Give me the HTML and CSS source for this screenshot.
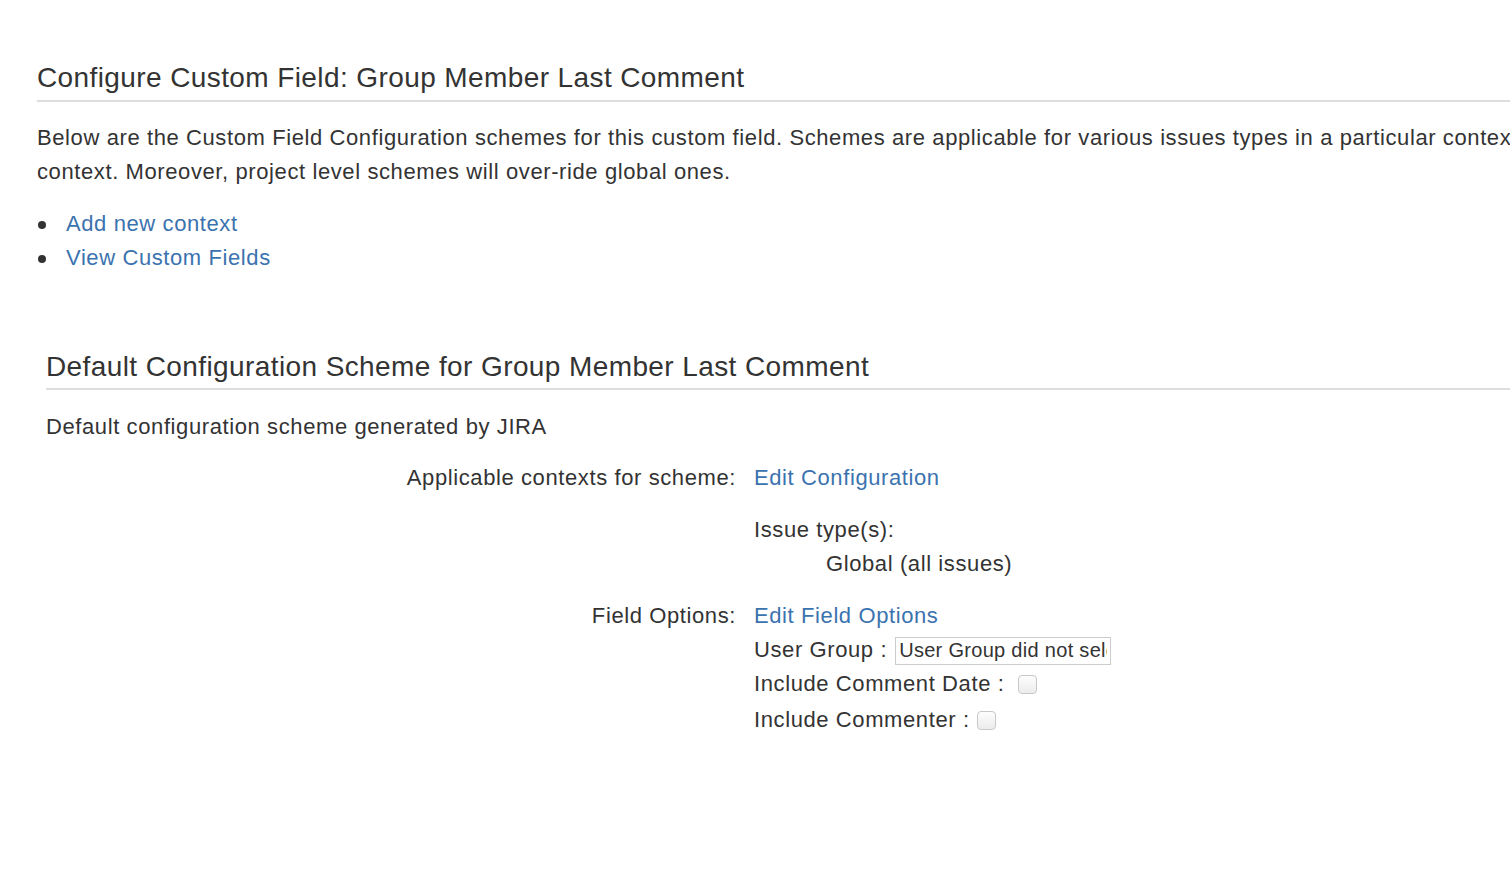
FILE: index.html
```html
<!DOCTYPE html>
<html lang="en">
<head>
  <meta charset="UTF-8">
  <title>Configure Custom Field</title>
<link rel="stylesheet" href="styles.css">
</head>
<body>

  <!-- Page content -->
  <div class="page">
    <h1 class="page-title">Configure Custom Field: Group Member Last Comment</h1>

    <p class="intro">Below are the Custom Field Configuration schemes for this custom field. Schemes are applicable for various issues types in a particular context or project context. Moreover, project level schemes will over-ride global ones.</p>

    <ul class="links">
      <li><a href="#">Add new context</a></li>
      <li><a href="#">View Custom Fields</a></li>
    </ul>

    <!-- Scheme panel -->
    <div class="scheme">
      <h2 class="scheme-title">Default Configuration Scheme for Group Member Last Comment</h2>
      <p class="scheme-desc">Default configuration scheme generated by JIRA</p>

      <div class="scheme-table">
        <div class="label">Applicable contexts for scheme:</div>
        <div class="value">
          <a href="#">Edit Configuration</a>
          <div class="issue-types">
            <div>Issue type(s):</div>
            <div class="indent">Global (all issues)</div>
          </div>
        </div>

        <div class="label">Field Options:</div>
        <div class="value">
          <a href="#">Edit Field Options</a>
          <div class="opt">User Group : <input class="text-field" type="text" value="User Group did not select" readonly></div>
          <div class="opt opt-date">Include Comment Date : <input class="check" type="checkbox"></div>
          <div class="opt opt-last">Include Commenter :<input class="check" type="checkbox"></div>
        </div>
      </div>
    </div>
  </div>

</body>
</html>
```

FILE: styles.css
```css
body {
  margin: 0;
  font-family: 'Liberation Sans', Arial, sans-serif;
  color: #333;
  background: #fff;
  overflow: hidden;
  font-size: 22px;
  letter-spacing: 0.6px;
  line-height: 34px;
}

a {
  color: #3b73af;
  text-decoration: none;
}

.page {
  width: 1700px;
  padding: 58px 0 0 37px;
}

/* Headings */
.page-title {
  font-size: 28px;
  font-weight: normal;
  letter-spacing: 0.4px;
  line-height: 40px;
  margin: 0;
  padding-bottom: 2px;
  border-bottom: 2px solid #ddd;
}

.intro {
  width: 1650px;
  margin: 19px 0 0;
}

.links {
  list-style: none;
  margin: 18px 0 0;
  padding-left: 1px;
}

.links li {
  display: flex;
  align-items: center;
}

.links li::before {
  content: "";
  width: 8px;
  height: 8px;
  border-radius: 50%;
  background: #333;
  margin-right: 20px;
  margin-top: 1px;
}

/* Scheme panel */
.scheme {
  margin-top: 72px;
  padding-left: 9px;
}

.scheme-title {
  font-size: 28px;
  font-weight: normal;
  letter-spacing: 0.4px;
  line-height: 40px;
  margin: 0;
  padding-bottom: 1px;
  border-bottom: 2px solid #ddd;
}

.scheme-desc {
  margin: 20px 0 0;
}

.scheme-table {
  display: grid;
  grid-template-columns: 690px auto;
  column-gap: 18px;
  row-gap: 18px;
  margin-top: 17px;
}

.label {
  text-align: right;
}

.issue-types {
  margin-top: 18px;
}

.indent {
  padding-left: 72px;
}

.opt {
  display: flex;
  align-items: center;
  height: 34px;
}

.opt-last {
  margin-top: 2px;
}

.text-field {
  width: 216px;
  height: 28px;
  box-sizing: border-box;
  margin: 1px 0 0 8px;
  padding: 0 3px;
  border: 1px solid #ccc;
  font-family: 'Liberation Sans', Arial, sans-serif;
  font-size: 20px;
  letter-spacing: 0.3px;
  color: #333;
  background: #fff;
  outline: none;
}

.check {
  appearance: none;
  width: 19px;
  height: 19px;
  margin: 0 0 0 6px;
  border: 1px solid #c8c8c8;
  border-radius: 4px;
  background: linear-gradient(#fdfdfd, #ececec);
}

.opt-date .check {
  margin-left: 14px;
}

.opt-last .check {
  margin-left: 7px;
}
```
